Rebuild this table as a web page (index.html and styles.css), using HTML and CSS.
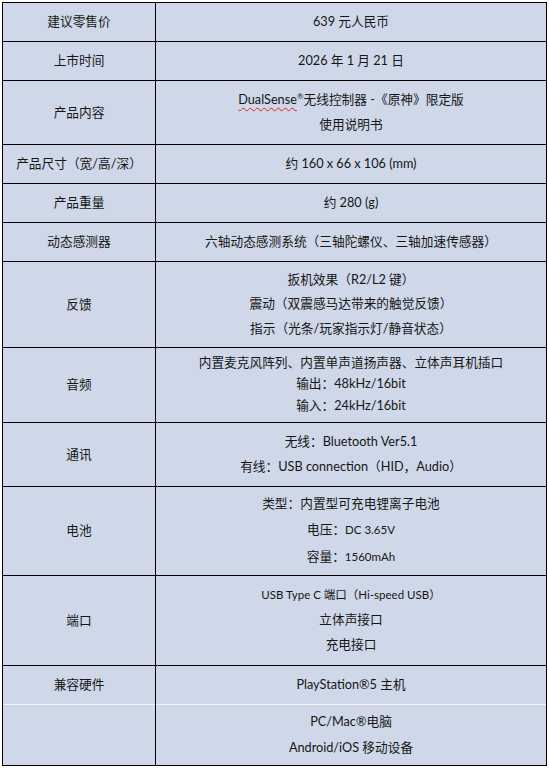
FILE: index.html
```html
<!DOCTYPE html>
<html lang="zh-CN">
<head>
<meta charset="utf-8">
<title>规格</title>
<link rel="stylesheet" href="styles.css">
</head>
<body>
<div class="spec">
  <div class="cell">建议零售价</div>
  <div class="cell">639 元人民币</div>

  <div class="cell">上市时间</div>
  <div class="cell">2026 年 1 月 21 日</div>

  <div class="cell">产品内容</div>
  <div class="cell l24">
    <div><span class="spell">DualSense</span><sup class="reg">®</sup>无线控制器 -《原神》限定版</div>
    <div>使用说明书</div>
  </div>

  <div class="cell">产品尺寸（宽/高/深）</div>
  <div class="cell">约 160 x 66 x 106 (mm)</div>

  <div class="cell">产品重量</div>
  <div class="cell">约 280 (g)</div>

  <div class="cell">动态感测器</div>
  <div class="cell">六轴动态感测系统（三轴陀螺仪、三轴加速传感器）</div>

  <div class="cell">反馈</div>
  <div class="cell l24">
    <div>扳机效果（R2/L2 键）</div>
    <div>震动（双震感马达带来的触觉反馈）</div>
    <div>指示（光条/玩家指示灯/静音状态）</div>
  </div>

  <div class="cell">音频</div>
  <div class="cell l21">
    <div>内置麦克风阵列、内置单声道扬声器、立体声耳机插口</div>
    <div>输出：48kHz/16bit</div>
    <div>输入：24kHz/16bit</div>
  </div>

  <div class="cell">通讯</div>
  <div class="cell l25">
    <div>无线：Bluetooth Ver5.1</div>
    <div>有线：USB connection（HID，Audio）</div>
  </div>

  <div class="cell">电池</div>
  <div class="cell l26">
    <div>类型：内置型可充电锂离子电池</div>
    <div>电压：<span class="small">DC 3.65V</span></div>
    <div>容量：<span class="small">1560mAh</span></div>
  </div>

  <div class="cell">端口</div>
  <div class="cell l24">
    <div class="small">USB Type C 端口（Hi-speed USB）</div>
    <div>立体声接口</div>
    <div>充电接口</div>
  </div>

  <div class="cell">兼容硬件</div>
  <div class="cell">PlayStation®5 主机</div>

  <div class="cell last"></div>
  <div class="cell last l26">
    <div>PC/Mac®电脑</div>
    <div>Android/iOS 移动设备</div>
  </div>
</div>
</body>
</html>
```

FILE: styles.css
```css
body {
  margin: 0;
  background: #ffffff;
  font-family: Lato, "Noto Sans CJK SC", sans-serif;
  font-size: 12.7px;
  color: #161616;
}

.spec {
  box-sizing: border-box;
  width: 545px;
  margin: 2px 0 0 2px;
  padding: 1px;
  display: grid;
  grid-template-columns: 152px 390px;
  grid-template-rows: 38px 38px 63px 38px 38px 38px 85px 74px 63px 88px 89px 38px 60px;
  gap: 1px;
  background: #000000;
}

.cell {
  box-sizing: border-box;
  background: #cfd8e8;
  display: flex;
  flex-direction: column;
  justify-content: center;
  align-items: center;
  text-align: center;
  line-height: 20px;
  padding-bottom: 2px;
  white-space: nowrap;
}

.l21 { line-height: 21.5px; }
.l24 { line-height: 24.5px; }
.l25 { line-height: 25px; }
.l26 { line-height: 26px; }

.spell {
  text-decoration: underline wavy #e02020;
  text-decoration-thickness: 1px;
  text-underline-offset: 3px;
}

.reg {
  font-size: 8px;
  vertical-align: 5px;
  line-height: 0;
}

.small {
  font-size: 11.5px;
}

.last {
  margin-top: -1px;
  border-top: 1px solid #f3f5f9;
}
```
